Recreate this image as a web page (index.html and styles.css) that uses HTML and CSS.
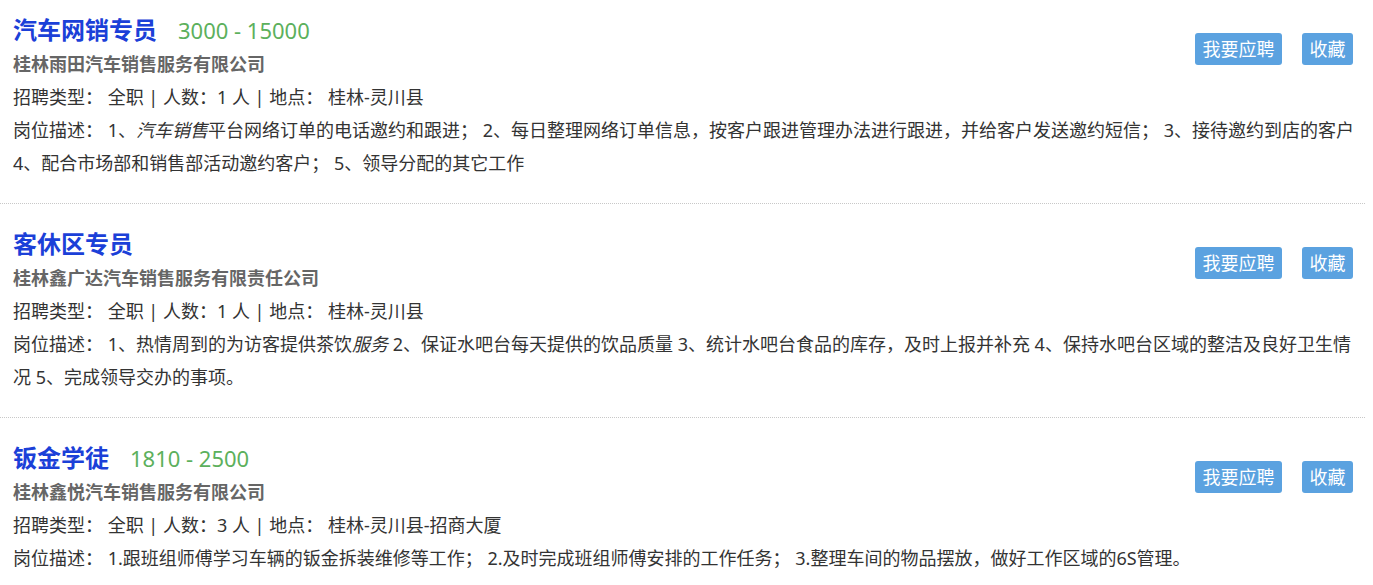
FILE: index.html
```html
<!DOCTYPE html>
<html lang="zh-CN">
<head>
<meta charset="utf-8">
<title>职位列表</title>
<link rel="stylesheet" href="styles.css">
</head>
<body>
<div class="job-list">
  <div class="job">
    <div class="job-actions">
      <a class="btn" href="#">我要应聘</a>
      <a class="btn" href="#">收藏</a>
    </div>
    <div class="job-head">
      <a class="job-title" href="#">汽车网销专员</a>
      <span class="salary">3000 - 15000</span>
    </div>
    <div class="company">桂林雨田汽车销售服务有限公司</div>
    <div class="meta">招聘类型： 全职 | 人数：1 人 | 地点： 桂林-灵川县</div>
    <div class="desc">岗位描述： 1、<em>汽车销售</em>平台网络订单的电话邀约和跟进； 2、每日整理网络订单信息，按客户跟进管理办法进行跟进，并给客户发送邀约短信； 3、接待邀约到店的客户 4、配合市场部和销售部活动邀约客户； 5、领导分配的其它工作</div>
  </div>
  <div class="job">
    <div class="job-actions">
      <a class="btn" href="#">我要应聘</a>
      <a class="btn" href="#">收藏</a>
    </div>
    <div class="job-head">
      <a class="job-title" href="#">客休区专员</a>
    </div>
    <div class="company">桂林鑫广达汽车销售服务有限责任公司</div>
    <div class="meta">招聘类型： 全职 | 人数：1 人 | 地点： 桂林-灵川县</div>
    <div class="desc">岗位描述： 1、热情周到的为访客提供茶饮<em>服务</em> 2、保证水吧台每天提供的饮品质量 3、统计水吧台食品的库存，及时上报并补充 4、保持水吧台区域的整洁及良好卫生情况 5、完成领导交办的事项。</div>
  </div>
  <div class="job">
    <div class="job-actions">
      <a class="btn" href="#">我要应聘</a>
      <a class="btn" href="#">收藏</a>
    </div>
    <div class="job-head">
      <a class="job-title" href="#">钣金学徒</a>
      <span class="salary">1810 - 2500</span>
    </div>
    <div class="company">桂林鑫悦汽车销售服务有限公司</div>
    <div class="meta">招聘类型： 全职 | 人数：3 人 | 地点： 桂林-灵川县-招商大厦</div>
    <div class="desc">岗位描述： 1.跟班组师傅学习车辆的钣金拆装维修等工作； 2.及时完成班组师傅安排的工作任务； 3.整理车间的物品摆放，做好工作区域的6S管理。</div>
  </div>
</div>
</body>
</html>
```
FILE: styles.css
```css
html, body {
  margin: 0;
  padding: 0;
  background: #fff;
}

body {
  font-family: "Noto Sans", "Noto Sans CJK SC", sans-serif;
  color: #333;
  font-size: 18px;
}

.job-list {
  width: 1365px;
}

.job {
  display: flow-root;
  padding: 22px 5px 23px 13px;
  border-bottom: 1px dotted #c8c8c8;
}

.job:first-child {
  padding-top: 12px;
}

.job-head {
  display: flex;
  align-items: baseline;
  gap: 21px;
  height: 36px;
  line-height: 36px;
}

.job-title {
  font-size: 24px;
  font-weight: 700;
  color: #1b40d8;
  text-decoration: none;
}

.salary {
  font-size: 22px;
  color: #5cb05c;
}

.company {
  font-weight: 700;
  color: #666;
  line-height: 33px;
}

.meta,
.desc {
  line-height: 33px;
}

.desc em {
  font-style: italic;
}

.job-actions {
  float: right;
  display: flex;
  gap: 20px;
  margin-top: 21px;
  margin-right: 7px;
}

.btn {
  display: block;
  height: 32px;
  line-height: 32px;
  padding: 0 7.5px;
  background: #5ba2e0;
  color: #fff;
  border-radius: 3px;
  text-decoration: none;
  white-space: nowrap;
}
```
